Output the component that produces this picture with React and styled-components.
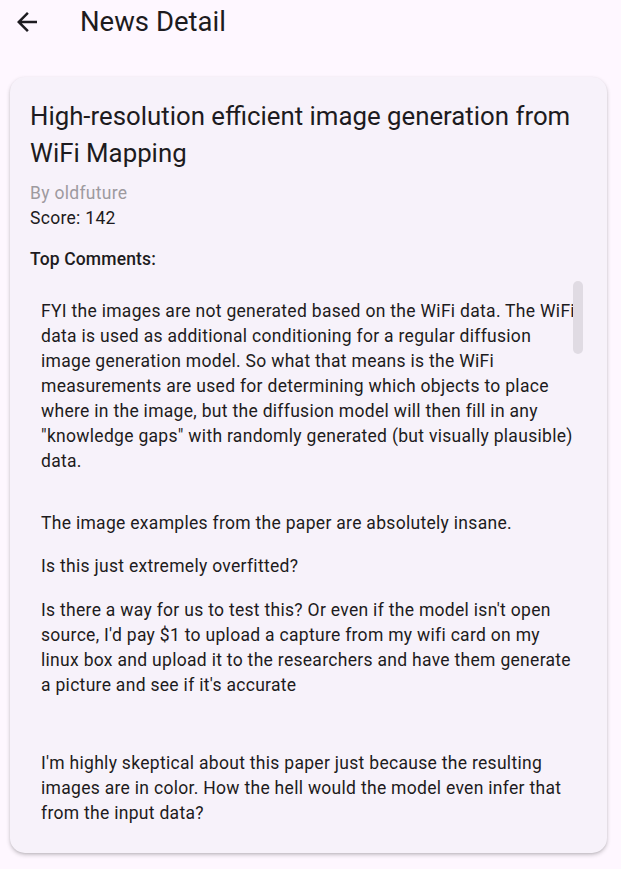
import React from "react";
import styled, { createGlobalStyle } from "styled-components";
import { MdArrowBack } from "react-icons/md";

const Global = createGlobalStyle`
  html, body { margin: 0; padding: 0; height: 100%; }
  body { background: #FEF7FF; font-family: Roboto, "Noto Sans", sans-serif; color: #1D1B20; }
  #root { height: 100%; }
  * { box-sizing: border-box; }
`;

const Page = styled.div`
  height: 100vh;
  display: flex;
  flex-direction: column;
  background: #FEF7FF;
  overflow: hidden;
`;

const AppBar = styled.header`
  height: 44px;
  flex: none;
  display: flex;
  align-items: center;
`;

const BackButton = styled.button`
  width: 30px;
  height: 30px;
  margin-left: 12px;
  padding: 0;
  border: none;
  background: none;
  color: #1D1B20;
  display: flex;
  align-items: center;
  justify-content: center;
  cursor: pointer;
`;

const AppTitle = styled.h1`
  margin: 0 0 0 38px;
  font-size: 27.5px;
  font-weight: 400;
  line-height: 34px;
  color: #1D1B20;
`;

const Card = styled.article`
  flex: 1;
  min-height: 0;
  margin: 33px 14px 16px 10px;
  padding: 21px 20px 20px;
  background: #F7F2FA;
  border-radius: 15px;
  box-shadow: 0 2px 4px rgba(0, 0, 0, 0.2), 0 1px 2px rgba(0, 0, 0, 0.08);
  display: flex;
  flex-direction: column;
`;

const Title = styled.h2`
  margin: 0;
  font-size: 25.8px;
  font-weight: 400;
  line-height: 37px;
  color: #1D1B20;
`;

const Meta = styled.div`
  font-size: 17.5px;
  line-height: 25px;
  letter-spacing: 0.3px;
  color: ${(p) => (p.$muted ? "#9E9A9F" : "#1D1B20")};
  margin-top: ${(p) => p.$top || 0}px;
`;

const SectionLabel = styled.h3`
  margin: 16px 0 0;
  font-size: 17.5px;
  font-weight: 500;
  line-height: 25px;
  letter-spacing: 0.15px;
  color: #1D1B20;
`;

const CommentList = styled.div`
  position: relative;
  flex: 1;
  min-height: 0;
  margin-top: 9px;
  padding-top: 9px;
  overflow: hidden;
`;

const Comment = styled.p`
  margin: 0 0 ${(p) => p.$extra || 0}px;
  padding: 9.25px 11px;
  font-size: 17.5px;
  line-height: 25px;
  letter-spacing: 0.3px;
  color: #1D1B20;
`;

const Thumb = styled.div`
  position: absolute;
  top: 0;
  right: 4px;
  width: 10px;
  height: 73px;
  border-radius: 5px;
  background: #E0DBE3;
`;

const comments = [
  {
    text: 'FYI the images are not generated based on the WiFi data. The WiFi data is used as additional conditioning for a regular diffusion image generation model. So what that means is the WiFi measurements are used for determining which objects to place where in the image, but the diffusion model will then fill in any "knowledge gaps" with randomly generated (but visually plausible) data.',
    extra: 18,
  },
  { text: "The image examples from the paper are absolutely insane." },
  { text: "Is this just extremely overfitted?" },
  {
    text: "Is there a way for us to test this? Or even if the model isn't open source, I'd pay $1 to upload a capture from my wifi card on my linux box and upload it to the researchers and have them generate a picture and see if it's accurate",
    extra: 35,
  },
  {
    text: "I'm highly skeptical about this paper just because the resulting images are in color. How the hell would the model even infer that from the input data?",
  },
];

export default function App() {
  return (
    <Page>
      <Global />
      <AppBar>
        <BackButton aria-label="Back">
          <MdArrowBack size={30} />
        </BackButton>
        <AppTitle>News Detail</AppTitle>
      </AppBar>
      <Card>
        <Title>High-resolution efficient image generation from WiFi Mapping</Title>
        <Meta $muted $top={9}>By oldfuture</Meta>
        <Meta>Score: 142</Meta>
        <SectionLabel>Top Comments:</SectionLabel>
        <CommentList>
          {comments.map((c, i) => (
            <Comment key={i} $extra={c.extra}>
              {c.text}
            </Comment>
          ))}
          <Thumb />
        </CommentList>
      </Card>
    </Page>
  );
}
